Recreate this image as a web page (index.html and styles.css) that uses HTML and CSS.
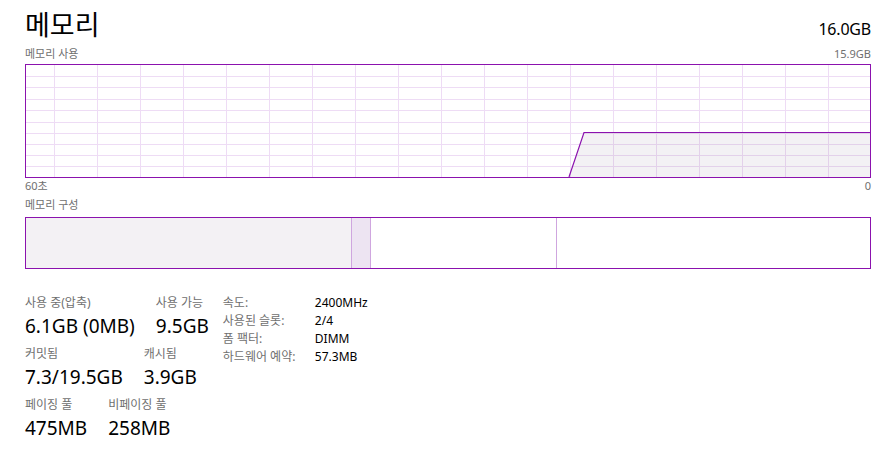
FILE: index.html
```html
<!DOCTYPE html>
<html lang="ko">
<head>
<meta charset="utf-8">
<title>메모리</title>
<link rel="stylesheet" href="styles.css">
</head>
<body>
<div class="page">
  <div class="header">
    <div class="title">메모리</div>
    <div class="total">16.0GB</div>
  </div>
  <div class="caption caption-top">
    <span>메모리 사용</span>
    <span>15.9GB</span>
  </div>
  <div class="graph">
    <svg class="graph-svg" width="844" height="112" viewBox="0 0 844 112">
      <g class="grid-h">
        <line x1="0" y1="11.5" x2="844" y2="11.5"/>
        <line x1="0" y1="22.5" x2="844" y2="22.5"/>
        <line x1="0" y1="34.5" x2="844" y2="34.5"/>
        <line x1="0" y1="45.5" x2="844" y2="45.5"/>
        <line x1="0" y1="57.5" x2="844" y2="57.5"/>
        <line x1="0" y1="68.5" x2="844" y2="68.5"/>
        <line x1="0" y1="79.5" x2="844" y2="79.5"/>
        <line x1="0" y1="90.5" x2="844" y2="90.5"/>
        <line x1="0" y1="101.5" x2="844" y2="101.5"/>
      </g>
      <g class="grid-v">
        <line x1="28.5" y1="0" x2="28.5" y2="112"/>
        <line x1="71.5" y1="0" x2="71.5" y2="112"/>
        <line x1="114.5" y1="0" x2="114.5" y2="112"/>
        <line x1="157.5" y1="0" x2="157.5" y2="112"/>
        <line x1="200.5" y1="0" x2="200.5" y2="112"/>
        <line x1="243.5" y1="0" x2="243.5" y2="112"/>
        <line x1="286.5" y1="0" x2="286.5" y2="112"/>
        <line x1="329.5" y1="0" x2="329.5" y2="112"/>
        <line x1="372.5" y1="0" x2="372.5" y2="112"/>
        <line x1="415.5" y1="0" x2="415.5" y2="112"/>
        <line x1="458.5" y1="0" x2="458.5" y2="112"/>
        <line x1="501.5" y1="0" x2="501.5" y2="112"/>
        <line x1="544.5" y1="0" x2="544.5" y2="112"/>
        <line x1="587.5" y1="0" x2="587.5" y2="112"/>
        <line x1="630.5" y1="0" x2="630.5" y2="112"/>
        <line x1="673.5" y1="0" x2="673.5" y2="112"/>
        <line x1="716.5" y1="0" x2="716.5" y2="112"/>
        <line x1="759.5" y1="0" x2="759.5" y2="112"/>
        <line x1="802.5" y1="0" x2="802.5" y2="112"/>
      </g>
      <polygon class="usage-fill" points="543,112 558,67.5 844,67.5 844,112"/>
      <polyline class="usage-line" points="543,112 558,67.5 844,67.5"/>
    </svg>
  </div>
  <div class="caption caption-axis">
    <span>60초</span>
    <span>0</span>
  </div>
  <div class="caption caption-comp">
    <span>메모리 구성</span>
  </div>
  <div class="comp">
    <div class="seg seg-inuse" style="width:326px"></div>
    <div class="seg seg-modified" style="width:19px"></div>
    <div class="seg seg-standby" style="width:186px"></div>
    <div class="seg seg-free"></div>
  </div>
  <div class="stats">
    <div class="stat-block">
      <div class="stat-row">
        <div class="stat">
          <div class="stat-label">사용 중(압축)</div>
          <div class="stat-value">6.1GB (0MB)</div>
        </div>
        <div class="stat">
          <div class="stat-label">사용 가능</div>
          <div class="stat-value">9.5GB</div>
        </div>
      </div>
      <div class="stat-row">
        <div class="stat">
          <div class="stat-label">커밋됨</div>
          <div class="stat-value">7.3/19.5GB</div>
        </div>
        <div class="stat">
          <div class="stat-label">캐시됨</div>
          <div class="stat-value">3.9GB</div>
        </div>
      </div>
      <div class="stat-row">
        <div class="stat">
          <div class="stat-label">페이징 풀</div>
          <div class="stat-value">475MB</div>
        </div>
        <div class="stat">
          <div class="stat-label">비페이징 풀</div>
          <div class="stat-value">258MB</div>
        </div>
      </div>
    </div>
    <div class="info">
      <div class="info-key">속도:</div><div class="info-val">2400MHz</div>
      <div class="info-key">사용된 슬롯:</div><div class="info-val">2/4</div>
      <div class="info-key">폼 팩터:</div><div class="info-val">DIMM</div>
      <div class="info-key">하드웨어 예약:</div><div class="info-val">57.3MB</div>
    </div>
  </div>
</div>
</body>
</html>
```
FILE: styles.css
```css
html, body {
  margin: 0;
  padding: 0;
  background: #ffffff;
}

body {
  font-family: "Segoe UI", "Noto Sans", "Noto Sans CJK KR", sans-serif;
  color: #000000;
}

.page {
  width: 846px;
  padding: 0 6px 0 25px;
}

.header {
  display: flex;
  justify-content: space-between;
  align-items: baseline;
  padding-top: 8px;
  height: 42px;
  box-sizing: border-box;
}

.title {
  font-size: 27px;
  line-height: 34px;
  font-weight: 400;
}

.total {
  font-size: 16px;
  line-height: 20px;
  letter-spacing: -0.2px;
}

.caption {
  display: flex;
  justify-content: space-between;
  font-size: 11px;
  line-height: 14px;
  color: #6f6f6f;
}

.caption-top {
  margin-top: 5px;
  height: 17px;
}

.graph {
  width: 844px;
  height: 112px;
  border: 1px solid #8b12ae;
}

.graph-svg {
  display: block;
}

.grid-h line,
.grid-v line {
  stroke: #eedcf5;
  stroke-width: 1;
}

.usage-fill {
  fill: rgba(120, 100, 130, 0.09);
  stroke: none;
}

.usage-line {
  fill: none;
  stroke: #8b12ae;
  stroke-width: 1.2;
}

.caption-axis {
  margin-top: 1px;
  height: 18px;
}

.caption-comp {
  padding-top: 1px;
  height: 19px;
}

.comp {
  display: flex;
  width: 844px;
  height: 50px;
  border: 1px solid #8b12ae;
}

.seg {
  height: 100%;
  box-sizing: border-box;
  border-right: 1px solid #cfa6df;
}

.seg-inuse {
  background: #f3f1f4;
}

.seg-modified {
  background: #ede4f2;
}

.seg-standby {
  background: #ffffff;
}

.seg-free {
  flex: 1;
  border-right: none;
  background: #ffffff;
}

.stats {
  display: flex;
  gap: 14px;
  margin-top: 26px;
}

.stat-block {
  display: flex;
  flex-direction: column;
  gap: 7px;
}

.stat-row {
  display: flex;
  gap: 21px;
}

.stat {
  display: flex;
  flex-direction: column;
  gap: 2px;
}

.stat-label {
  font-size: 12px;
  line-height: 16px;
  color: #6f6f6f;
}

.stat-value {
  font-size: 19px;
  line-height: 26px;
}

.info {
  display: grid;
  grid-template-columns: 92px auto;
  grid-auto-rows: 18px;
  align-content: start;
  margin-top: -1px;
  font-size: 12px;
  line-height: 18px;
}

.info-key {
  color: #6f6f6f;
}

.info-val {
  color: #000000;
}
```
